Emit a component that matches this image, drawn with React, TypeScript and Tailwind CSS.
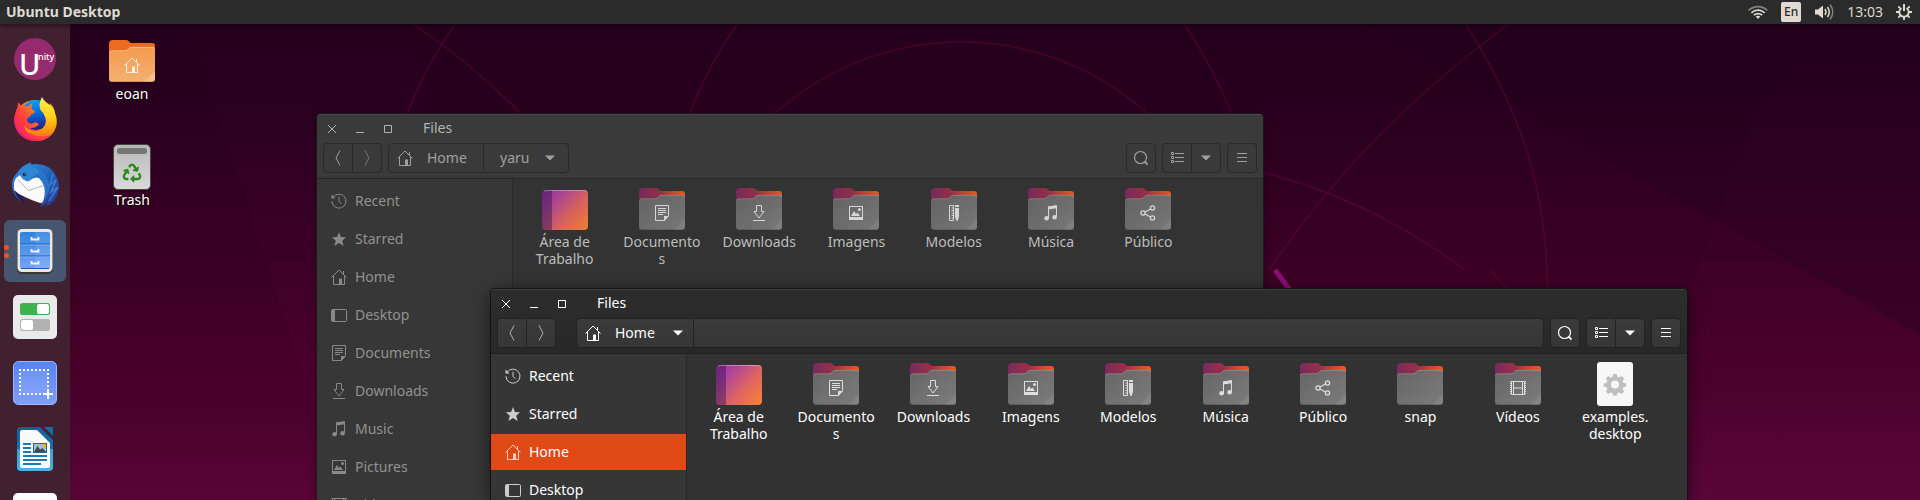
import type { ReactNode } from "react";
import clsx from "clsx";
import { FaRecycle } from "react-icons/fa";

type GlyphName =
  | "recent"
  | "star"
  | "home"
  | "desktop"
  | "document"
  | "download"
  | "music"
  | "picture"
  | "template"
  | "share"
  | "video";

/* 16x16 symbolic shapes, shared by the sidebar and the folder emblems */
const glyphs: Record<GlyphName, ReactNode> = {
  recent: (
    <>
      <path d="M2.2 4.2A7 7 0 1 1 1 8.6" fill="none" stroke="currentColor" />
      <path d="M1 8.6A7 7 0 0 0 2.6 12.6" fill="none" stroke="currentColor" strokeDasharray="1 1" />
      <path d="M.5 1.5v4h4z" fill="currentColor" />
      <path d="M8 3.8V8.4L10.4 10.8" fill="none" stroke="currentColor" />
    </>
  ),
  star: <path d="M8 1 9.9 6 15 6.300 11.200 9.700 12.600 15 8 12.1 3.400 15 4.800 9.700 1 6.300 6.1 6Z" fill="currentColor" />,
  home: (
    <>
      <path d="M.5 8.5 8 1l7.5 7.5M2.5 7v8.5h11V7M12.5 2v3" fill="none" stroke="currentColor" />
      <path d="M8 9.5h3V15H8z" fill="currentColor" />
    </>
  ),
  desktop: (
    <>
      <rect x=".5" y="2.5" width="15" height="12" rx="1" fill="none" stroke="currentColor" />
      <path d="M1 3h3v11H1z" fill="currentColor" />
    </>
  ),
  document: (
    <>
      <path d="M1.5.5h13v10l-4 5h-9z" fill="none" stroke="currentColor" />
      <path d="M10 11h5l-5 5zM4 3h8v1H4zM4 5h8v1H4zM4 7h8v1H4zM4 9h5v1H4z" fill="currentColor" />
    </>
  ),
  download: (
    <>
      <path d="M5.5.5h5v6H13L8 13 3 6.5h2.5z" fill="none" stroke="currentColor" />
      <path d="M2 15h12v1H2z" fill="currentColor" />
    </>
  ),
  music: (
    <>
      <path d="M5.5 13V2L13.5.8V11.5" fill="none" stroke="currentColor" />
      <path d="M5 1.6 14 .3v3L5 4.6z" fill="currentColor" />
      <circle cx="3.6" cy="13.3" r="2.3" fill="currentColor" />
      <circle cx="11.6" cy="12.3" r="2.3" fill="currentColor" />
    </>
  ),
  picture: (
    <>
      <path d="M1 1h14v14H1zM2 2v10h12V2z" fill="currentColor" fillRule="evenodd" />
      <path d="M3 11 6 6l2 3 1.5-1.5L12 11z" fill="currentColor" />
      <circle cx="11.5" cy="4.5" r="1.5" fill="currentColor" />
    </>
  ),
  template: (
    <>
      <path d="M3.5.5h4v15h-4z" fill="none" stroke="currentColor" />
      <path d="M5.5 3h2M5.5 5.5h2M5.5 8h2M5.5 10.5h2M5.5 13h2" stroke="currentColor" />
      <path d="M9 0h4v2H9zM9 3h4v9l-1.5 4h-1L9 12z" fill="currentColor" />
    </>
  ),
  share: (
    <g fill="none" stroke="currentColor" strokeWidth="1.3">
      <circle cx="3" cy="8" r="2.1" />
      <circle cx="12.5" cy="3" r="2.1" />
      <circle cx="12.5" cy="13" r="2.1" />
      <path d="M5 7l5.5-3M5 9l5.5 3" />
    </g>
  ),
  video: (
    <>
      <path d="M.5 1v14M15.5 1v14" stroke="currentColor" strokeDasharray="1 1" />
      <path d="M1.5 1.5h13v13h-13zM3.5 1.5v13M12.5 1.5v13M3.5 8h9" fill="none" stroke="currentColor" />
    </>
  ),
};

function Glyph({ name, className }: { name: GlyphName; className?: string }) {
  return (
    <svg viewBox="0 0 16 16" className={clsx("size-4 shrink-0", className)} aria-hidden="true">
      {glyphs[name]}
    </svg>
  );
}

function FolderIcon({ emblem, home = false }: { emblem?: GlyphName; home?: boolean }) {
  return (
    <svg viewBox="0 0 48 48" className="size-12" aria-hidden="true">
      <path
        d="M1 7Q1 3 5 3H18Q19.500 3 20.500 4L22.500 6H44Q47 6 47 9V20H1Z"
        fill={home ? "#eb6b20" : "url(#folder-back)"}
      />
      <path
        d="M1 16Q1 13.500 4 13.500H17Q18.500 13.500 19.500 12.500L21 11Q22 10 23.500 10H44Q47 10 47 13V42Q47 45 44 45H4Q1 45 1 42Z"
        fill={home ? "url(#home-front)" : "url(#folder-front)"}
      />
      <path
        d="M1.500 15.500Q2 13.800 4 13.800H17Q18.500 13.800 19.500 12.800L21 11.300Q22 10.300 23.500 10.300H44Q46 10.300 46.600 12"
        fill="none"
        stroke="#fff"
        strokeOpacity={home ? 0.35 : 0.2}
      />
      <path d="M36 45 47 34V42Q47 45 44 45Z" fill="#fff" fillOpacity={home ? 0.22 : 0.08} />
      <path d="M1.500 43Q2.300 44.600 4 44.600H44Q45.800 44.600 46.500 43" fill="none" stroke="#000" strokeOpacity=".18" />
      {emblem && (
        <svg x="16" y="20" width="16" height="16" viewBox="0 0 16 16" color={home ? "#fdf0e2" : "#dedede"}>
          {glyphs[emblem]}
        </svg>
      )}
    </svg>
  );
}

function DesktopFolderIcon() {
  return (
    <svg viewBox="0 0 48 48" className="size-12" aria-hidden="true">
      <rect x="1" y="5" width="46" height="40" rx="4" fill="url(#desk-folder)" />
      <path d="M5 5H11V45H5Q1 45 1 41V9Q1 5 5 5Z" fill="#2c1144" fillOpacity=".42" />
      <path d="M3 6.500Q4 5.500 5 5.500H43Q45 5.500 46 7" fill="none" stroke="#fff" strokeOpacity=".35" />
    </svg>
  );
}

function LauncherFileIcon() {
  return (
    <svg viewBox="0 0 48 48" className="size-12" aria-hidden="true">
      <rect x="6" y="2" width="36" height="44" rx="3" fill="#f7f7f7" />
      <path
        d="M22.2 14h3.600l.6 2.800 1.900.8 2.400-1.600 2.500 2.500-1.600 2.400.8 1.900 2.800.6v3.200l-2.800.6-.8 1.900 1.600 2.400-2.500 2.500-2.400-1.600-1.900.8-.6 2.300h-3.600l-.6-2.300-1.900-.8-2.400 1.600-2.500-2.500 1.600-2.400-.8-1.900-2.800-.6v-3.200l2.800-.6.8-1.900-1.600-2.400 2.500-2.500 2.400 1.600 1.900-.8zM24 20.500a4 4 0 1 0 0 8 4 4 0 0 0 0-8z"
        fill="#bfbfbf"
        fillRule="evenodd"
      />
    </svg>
  );
}

function TrashIcon() {
  return (
    <svg viewBox="0 0 48 48" className="size-12" aria-hidden="true">
      <rect x="5.500" y="1.500" width="37" height="45" rx="4.500" fill="url(#trash)" stroke="#444" />
      <rect x="9" y="5" width="30" height="6" rx="2.500" fill="#757575" />
      <FaRecycle x="14.500" y="20.500" width="19" height="19" size={19} color="#2b8a1a" />
    </svg>
  );
}

/* gradients referenced by the icons */
function Defs() {
  return (
    <svg className="absolute size-0" aria-hidden="true">
      <defs>
        <linearGradient id="folder-back" gradientUnits="userSpaceOnUse" x1="1" y1="16" x2="47" y2="6">
          <stop offset="0" stopColor="#772a5c" />
          <stop offset=".45" stopColor="#96304a" />
          <stop offset=".65" stopColor="#c04038" />
          <stop offset="1" stopColor="#f25a20" />
        </linearGradient>
        <linearGradient id="folder-front" x1="0" y1="0" x2="1" y2="1">
          <stop offset="0" stopColor="#656565" />
          <stop offset="1" stopColor="#7c7c7c" />
        </linearGradient>
        <linearGradient id="home-front" x1="0" y1="0" x2="0" y2="1">
          <stop offset="0" stopColor="#f49a50" />
          <stop offset="1" stopColor="#f5b070" />
        </linearGradient>
        <linearGradient id="desk-folder" x1="0" y1=".1" x2="1" y2=".9">
          <stop offset="0" stopColor="#a032a8" />
          <stop offset=".25" stopColor="#b2459a" />
          <stop offset=".6" stopColor="#dc6462" />
          <stop offset="1" stopColor="#fb7f37" />
        </linearGradient>
        <linearGradient id="trash" x1="0" y1="0" x2="0" y2="1">
          <stop offset="0" stopColor="#b8b8b8" />
          <stop offset="1" stopColor="#dadada" />
        </linearGradient>
        <linearGradient id="fox-body" x1=".1" y1=".9" x2=".9" y2=".3">
          <stop offset="0" stopColor="#e0148c" />
          <stop offset=".3" stopColor="#ff2a50" />
          <stop offset=".6" stopColor="#ff7a1a" />
          <stop offset="1" stopColor="#ffc21a" />
        </linearGradient>
        <linearGradient id="fox-head" x1="0" y1="1" x2="1" y2=".2">
          <stop offset="0" stopColor="#f4147c" />
          <stop offset=".45" stopColor="#ff3f3c" />
          <stop offset="1" stopColor="#ff9a1f" />
        </linearGradient>
        <linearGradient id="fox-globe" x1=".4" y1="0" x2=".5" y2="1">
          <stop offset="0" stopColor="#0ba0f8" />
          <stop offset=".5" stopColor="#0b5fd8" />
          <stop offset="1" stopColor="#2b1a80" />
        </linearGradient>
        <linearGradient id="fox-tail" x1=".4" y1="0" x2=".4" y2="1">
          <stop offset="0" stopColor="#fff04a" />
          <stop offset=".45" stopColor="#ffd21c" />
          <stop offset=".75" stopColor="#ff9a0c" />
          <stop offset="1" stopColor="#ff5a2a" />
        </linearGradient>
        <linearGradient id="bird" x1=".2" y1="0" x2=".8" y2="1">
          <stop offset="0" stopColor="#2f8ee0" />
          <stop offset=".5" stopColor="#1f5fb8" />
          <stop offset="1" stopColor="#2a3a94" />
        </linearGradient>
        <linearGradient id="drawer" x1="0" y1="0" x2="0" y2="1">
          <stop offset="0" stopColor="#2f83dd" />
          <stop offset="1" stopColor="#78a4fa" />
        </linearGradient>
        <linearGradient id="shot" x1="0" y1="0" x2="0" y2="1">
          <stop offset="0" stopColor="#5583f2" />
          <stop offset="1" stopColor="#7f9ff9" />
        </linearGradient>
        <linearGradient id="writer" x1="0" y1="0" x2="0" y2="1">
          <stop offset="0" stopColor="#086399" />
          <stop offset=".5" stopColor="#1474ac" />
          <stop offset=".5" stopColor="#3f9fd0" />
          <stop offset="1" stopColor="#4fb0dc" />
        </linearGradient>
      </defs>
    </svg>
  );
}

function Wallpaper() {
  return (
    <svg
      viewBox="0 0 1920 500"
      preserveAspectRatio="xMidYMin slice"
      className="absolute inset-0 size-full"
      aria-hidden="true"
    >
      <defs>
        <linearGradient id="wall" x1="0" y1="0" x2="0" y2="1">
          <stop offset="0" stopColor="#24001b" />
          <stop offset=".2" stopColor="#28001e" />
          <stop offset=".5" stopColor="#390024" />
          <stop offset=".75" stopColor="#480029" />
          <stop offset="1" stopColor="#570535" />
        </linearGradient>
        <linearGradient id="wedge" x1="0" y1="0" x2="0" y2="1">
          <stop offset="0" stopColor="#14000f" stopOpacity=".08" />
          <stop offset="1" stopColor="#14000f" stopOpacity=".28" />
        </linearGradient>
        <linearGradient id="glow" x1="0" y1="0" x2="0" y2="1">
          <stop offset="0" stopColor="#6a1050" stopOpacity="0" />
          <stop offset="1" stopColor="#6a1050" stopOpacity=".12" />
        </linearGradient>
      </defs>
      <rect width="1920" height="500" fill="url(#wall)" />
      <path d="M1320 0H1920V335Z" fill="url(#wedge)" />
      <path d="M1800 0H1920V500H1610Z" fill="url(#glow)" />
      <path d="M180 0 345 500H420V0Z" fill="url(#glow)" />
      <g fill="none" stroke="#7a0a4c" strokeOpacity=".36" strokeWidth="1.500">
        <path d="M412 23Q475 66 521 114" />
        <path d="M456 23Q425 66 407 114" />
        <path d="M738 23Q708 66 689 114" />
        <circle cx="961" cy="321" r="279" />
        <path d="M1184 23Q1212 66 1232 114" />
        <path d="M1465 23C1520 110 1548 190 1547 290" />
        <path d="M1510 23C1420 90 1340 165 1269 270" />
        <path d="M1262 172C1340 192 1405 225 1465 270" />
        <path d="M1490 270 1508 290" />
        <path d="M317 500 324 485" />
      </g>
      <path d="M1275 270 1290 290" stroke="#8a0f74" strokeWidth="5" fill="none" />
    </svg>
  );
}

function UnityIcon() {
  return (
    <svg viewBox="0 0 44 44" className="size-11 overflow-visible" aria-hidden="true">
      <circle cx="22" cy="22" r="21" fill="#952a6e" />
      <text x="6" y="38" fontSize="29" fontWeight="500" fill="#fff" fontFamily="Noto Sans, sans-serif">
        U
      </text>
      <text x="25" y="23" fontSize="9" fontWeight="500" fill="#fff" fontFamily="Noto Sans, sans-serif">
        nity
      </text>
    </svg>
  );
}

function FirefoxIcon() {
  return (
    <svg viewBox="0 0 46 46" className="size-[46px]" aria-hidden="true">
      <path d="M23 4A21 20.500 0 1 0 44 24.500Q44 12 34 7Z" fill="url(#fox-body)" />
      <circle cx="24" cy="19" r="15" fill="url(#fox-globe)" />
      <path
        d="M6.500 6Q8 9 10.500 10.500Q12.500 9.500 16 10.500Q18 8 20.500 7.500Q19 10.500 19.500 13Q23 14.500 23 16Q22 17.800 19 18.500Q18.800 20.500 16.500 21.500Q14.500 22.500 14.800 24.500Q17 28.500 20.500 27.500Q24 25.600 26.500 27.800Q27 29 25 30Q22.500 32.500 18 32Q22 36.500 29 34.500Q30 39 24 42.500Q11 43 5 33Q1 25 4 14.500Q5.500 12 6.500 6Z"
        fill="url(#fox-head)"
      />
      <path
        d="M30 1Q26 8 28.500 14Q33.500 19 34 25Q33 33 25 35Q16 36 12 29Q15 42 30 44.500Q41 41 44 31Q46 24 43 17.500Q43 14 40 10Q36 8 34.500 6.500Q31.500 4.500 30 1Z"
        fill="url(#fox-tail)"
      />
      <path d="M37 7Q38.500 11 42.500 15Q41.500 9.500 37 7Z" fill="#ffb914" />
      <path d="M5 30Q12 42 24 45Q33 45.500 39 39Q28 43 18 37Q9 34 5 30Z" fill="#ff3058" fillOpacity=".75" />
    </svg>
  );
}

function ThunderbirdIcon() {
  return (
    <svg viewBox="0 0 48 48" className="size-12" aria-hidden="true">
      <path
        d="M20 1Q18 3 18.500 3.500Q34 1 42 10Q50 21 47 31Q45 41 35 46L36.500 41Q33 45 29 46Q32 40 32 32L10 30L12 41Q3 37 1 26Q0 18 6 12Q10 6 14 4Z"
        fill="url(#bird)"
      />
      <path d="M2 24Q4 36 13 42Q11 36 12 31L6 22Z" fill="#1e1a58" />
      <path d="M5 17 9 14Q15 20 18 20Q23 15 28 17Q33 22 34 28Q34 38 31 42Q27 42 14 36Q8 34 3 29Q2 22 5 17Z" fill="#fafafa" />
      <path d="M7 19 17.500 29.500 34 24" fill="none" stroke="#b5b5b5" />
      <path d="M9 14Q12 5 20 1.500Q20 4 19 5.500Q28 6 28 12Q22 15 17 20.500Q11 19 9 14Z" fill="#2f86d2" />
      <path d="M28 8Q40 16 38 30L33 42Q36 24 28 17Q26 12 28 8Z" fill="#2c78c8" fillOpacity=".8" />
      <path d="M42 13 39 24 45 19 40 31 47 26 38 40" fill="none" stroke="#4a9be2" strokeWidth="1.500" strokeOpacity=".6" />
      <circle cx="13.500" cy="13.500" r="1.800" fill="#17284f" />
      <circle cx="13.800" cy="13.200" r=".7" fill="#a08640" />
    </svg>
  );
}

function FilesAppIcon() {
  return (
    <svg viewBox="0 0 40 48" className="h-12 w-10" aria-hidden="true">
      <rect x="2" y="2" width="36" height="45" rx="5" fill="#3a3630" />
      <rect x="2.500" y="2" width="35" height="43" rx="4.500" fill="#ece8df" />
      <rect x="5" y="5" width="30" height="37" rx="2" fill="url(#drawer)" />
      <path d="M20 5H33Q35 5 35 7V40Q35 42 33 42H20Z" fill="#fff" fillOpacity=".1" />
      <path d="M5 17H35M5 29H35M6 41.500H34" stroke="#1560b4" />
      <path d="M5 18H35M5 30H35" stroke="#8cbcf6" strokeOpacity=".7" />
      <path d="M16.500 10V12.500H23.500V10M16.500 22V24.500H23.500V22M16.500 34V36.500H23.500V34" fill="none" stroke="#f4f0ea" strokeWidth="1.800" />
    </svg>
  );
}

function TweaksIcon() {
  return (
    <svg viewBox="0 0 46 46" className="size-[46px]" aria-hidden="true">
      <rect x="1" y="1" width="44" height="44" rx="5" fill="#eaeaea" />
      <rect x="8" y="9" width="30" height="12" rx="2.500" fill="#3fb24f" />
      <rect x="25" y="10" width="12" height="10" rx="2" fill="#fff" />
      <rect x="8" y="25" width="30" height="12" rx="2.500" fill="#b2b2b2" />
      <rect x="9" y="26" width="12" height="10" rx="2" fill="#fff" />
    </svg>
  );
}

function ScreenshotIcon() {
  return (
    <svg viewBox="0 0 46 46" className="size-[46px]" aria-hidden="true">
      <rect x="1.500" y="1.500" width="43" height="43" rx="5" fill="url(#shot)" stroke="#9db8fb" />
      <rect x="8" y="10" width="28" height="24" fill="#fff" fillOpacity=".1" />
      <path d="M7 10H37M7 34H32" stroke="#fff" strokeWidth="2" strokeDasharray="2 2" />
      <path d="M8 13V35M36 13V27" stroke="#fff" strokeWidth="2" strokeDasharray="2 2" />
      <path d="M36 29V39M31 34H41" stroke="#fff" strokeWidth="2" />
    </svg>
  );
}

function WriterIcon() {
  return (
    <svg viewBox="0 0 40 46" className="h-[46px] w-10" aria-hidden="true">
      <path d="M6 1H25L38 14V41Q38 45 34 45H6Q2 45 2 41V5Q2 1 6 1Z" fill="url(#writer)" />
      <path d="M29 1H38V10Z" fill="#0b71a6" />
      <path d="M7 4H22L35 17V40Q35 42 33 42H7Q5 42 5 40V6Q5 4 7 4Z" fill="#fafafa" />
      <path d="M8 18H16M8 22H16M8 26H16M8 30H32M8 34H32M8 38H26" stroke="#1a7ab8" strokeWidth="2" />
      <rect x="18.500" y="17.500" width="13" height="9" fill="#8cc8ec" stroke="#1a6a9c" />
      <path d="M19 26 22.500 20 25 23.500 27.500 22 31 26Z" fill="#44484a" />
      <rect x="28" y="18" width="3" height="3" fill="#e8b912" />
    </svg>
  );
}

function BlankAppIcon() {
  return (
    <svg viewBox="0 0 46 46" className="size-[46px]" aria-hidden="true">
      <rect x="1" y="1" width="44" height="44" rx="5" fill="#fbfbfb" />
    </svg>
  );
}

function LauncherItem({ label, active = false, children }: { label: string; active?: boolean; children: ReactNode }) {
  return (
    <button type="button" aria-label={label} className="relative flex h-[66px] w-full shrink-0 items-center justify-center">
      <span
        className={clsx("flex size-[62px] items-center justify-center rounded-md", active && "bg-[#475670]")}
      >
        {children}
      </span>
      {active && (
        <span className="absolute left-1 flex flex-col gap-[3px]">
          <span className="size-[5px] rounded-full bg-[#e95420]" />
          <span className="size-[5px] rounded-full bg-[#e95420]" />
        </span>
      )}
    </button>
  );
}

function Launcher() {
  return (
    <nav aria-label="Launcher" className="relative flex w-[70px] shrink-0 flex-col overflow-hidden bg-[#41212f]">
      <button type="button" aria-label="Unity" className="flex h-[62px] shrink-0 items-center justify-center pt-2">
        <UnityIcon />
      </button>
      <LauncherItem label="Firefox">
        <FirefoxIcon />
      </LauncherItem>
      <LauncherItem label="Thunderbird">
        <ThunderbirdIcon />
      </LauncherItem>
      <LauncherItem label="Files" active>
        <FilesAppIcon />
      </LauncherItem>
      <LauncherItem label="Tweaks">
        <TweaksIcon />
      </LauncherItem>
      <LauncherItem label="Screenshot">
        <ScreenshotIcon />
      </LauncherItem>
      <LauncherItem label="Writer">
        <WriterIcon />
      </LauncherItem>
      <LauncherItem label="Applications">
        <BlankAppIcon />
      </LauncherItem>
    </nav>
  );
}

function TopBar() {
  return (
    <header className="relative z-10 flex h-6 shrink-0 items-center justify-between bg-[#2b2b2b] pr-2 pl-1.5 text-[#dfdbd2] shadow-[0_1px_4px_rgba(0,0,0,0.6)]">
      <h1 className="text-sm font-bold">Ubuntu Desktop</h1>
      <div className="flex items-center gap-[13px]">
        <button type="button" aria-label="Network">
          <svg viewBox="0 0 20 16" className="h-4 w-5" fill="none" stroke="#dfdbd2" strokeWidth="1.600" aria-hidden="true">
            <path d="M.6 6.400A13.500 13.500 0 0 1 19.400 6.400" strokeOpacity=".5" />
            <path d="M3.400 8.800A9.600 9.600 0 0 1 16.600 8.800" />
            <path d="M5.900 11.200A6 6 0 0 1 14.100 11.200" />
            <path d="M7.700 12.600Q10 11 12.300 12.600L10 15Z" fill="#dfdbd2" stroke="none" />
          </svg>
        </button>
        <button
          type="button"
          className="flex size-5 items-center justify-center rounded-xs bg-[#dfdbd2] text-xs font-medium text-[#2b2b2b]"
        >
          En
        </button>
        <button type="button" aria-label="Volume">
          <svg viewBox="0 0 20 18" className="h-[18px] w-5" fill="none" stroke="#dfdbd2" strokeWidth="1.500" aria-hidden="true">
            <path d="M1 6.500H4L9 2.500V15.500L4 11.500H1Z" fill="#dfdbd2" stroke="none" />
            <path d="M11 6Q13 9 11 12" />
            <path d="M13.500 4Q17 9 13.500 14" />
            <path d="M16 1.500Q21.500 9 16 16.500" strokeOpacity=".5" />
          </svg>
        </button>
        <time className="text-sm">13:03</time>
        <button type="button" aria-label="System">
          <svg viewBox="0 0 16 16" className="size-4" fill="none" stroke="#dfdbd2" aria-hidden="true">
            <path d="M5.500 4A4.700 4.700 0 1 0 10.500 4" strokeWidth="1.800" />
            <path d="M8 0V7" strokeWidth="2" />
            <path
              d="M4 4 2.300 2.300M12 4 13.700 2.300M3 8H0M13 8H16M4.300 11.700 2.300 13.700M11.700 11.700 13.700 13.700M8 13V16"
              strokeWidth="1.800"
            />
          </svg>
        </button>
      </div>
    </header>
  );
}

type Entry = { label: string; icon: ReactNode };

const yaruEntries: Entry[] = [
  { label: "Área de\nTrabalho", icon: <DesktopFolderIcon /> },
  { label: "Documento\ns", icon: <FolderIcon emblem="document" /> },
  { label: "Downloads", icon: <FolderIcon emblem="download" /> },
  { label: "Imagens", icon: <FolderIcon emblem="picture" /> },
  { label: "Modelos", icon: <FolderIcon emblem="template" /> },
  { label: "Música", icon: <FolderIcon emblem="music" /> },
  { label: "Público", icon: <FolderIcon emblem="share" /> },
];
const homeEntries: Entry[] = [
  ...yaruEntries,
  { label: "snap", icon: <FolderIcon /> },
  { label: "Vídeos", icon: <FolderIcon emblem="video" /> },
  { label: "examples.\ndesktop", icon: <LauncherFileIcon /> },
];

const places: { label: string; glyph: GlyphName }[] = [
  { label: "Recent", glyph: "recent" },
  { label: "Starred", glyph: "star" },
  { label: "Home", glyph: "home" },
  { label: "Desktop", glyph: "desktop" },
  { label: "Documents", glyph: "document" },
  { label: "Downloads", glyph: "download" },
  { label: "Music", glyph: "music" },
  { label: "Pictures", glyph: "picture" },
  { label: "Videos", glyph: "video" },
];

function Caret({ className }: { className?: string }) {
  return (
    <svg viewBox="0 0 10 6" className={clsx("h-1.5 w-2.5", className)} aria-hidden="true">
      <path d="M0 .5H10L5 5.500Z" fill="currentColor" />
    </svg>
  );
}

function Group({ focused, className, children }: { focused: boolean; className?: string; children: ReactNode }) {
  return (
    <div
      className={clsx(
        "flex h-[30px] divide-x overflow-hidden rounded border",
        focused
          ? "divide-[#222222] border-[#222222] bg-linear-to-b from-[#3b3b3b] to-[#363636] text-white"
          : "divide-[#292929] border-[#292929] text-[#a0a09f]",
        className,
      )}
    >
      {children}
    </div>
  );
}

function Tool({ label, dim = false, children }: { label: string; dim?: boolean; children: ReactNode }) {
  return (
    <button type="button" aria-label={label} className="flex flex-1 items-center justify-center">
      <span className={dim ? "opacity-60" : ""}>{children}</span>
    </button>
  );
}

function FilesWindow({
  focused,
  className,
  gridClass,
  entries,
  selected,
  path,
}: {
  focused: boolean;
  className: string;
  gridClass: string;
  entries: Entry[];
  selected?: string;
  path: ReactNode;
}) {
  return (
    <section
      aria-label="Files"
      className={clsx(
        "absolute bottom-0 flex flex-col overflow-hidden rounded-t",
        focused
          ? "bg-[#323232] shadow-[0_3px_16px_1px_rgba(0,0,0,0.55),0_0_0_1px_rgba(24,24,24,0.9)]"
          : "bg-[#333333] shadow-[0_2px_8px_rgba(0,0,0,0.35),0_0_0_1px_rgba(32,32,32,0.85)]",
        className,
      )}
    >
      <header
        className={clsx(
          "border-t border-b",
          focused
            ? "border-t-[#3d3d3d] border-b-[#202020] bg-linear-to-b from-[#2d2d2d] to-[#282828] text-white"
            : "border-t-[#474747] border-b-[#272727] bg-[#3a3a3a] text-[#b4b4b3]",
        )}
      >
        <div className="flex h-7 items-center">
          <div className="flex gap-3 pl-[7px]">
            <button type="button" aria-label="Close" className="flex size-4 items-center justify-center">
              <svg viewBox="0 0 8 8" className="size-2" stroke="currentColor" aria-hidden="true">
                <path d="M0 0 8 8M8 0 0 8" />
              </svg>
            </button>
            <button type="button" aria-label="Minimize" className="flex size-4 items-center justify-center">
              <svg viewBox="0 0 8 8" className="size-2" stroke="currentColor" aria-hidden="true">
                <path d="M0 7.500H8" />
              </svg>
            </button>
            <button type="button" aria-label="Maximize" className="flex size-4 items-center justify-center">
              <svg viewBox="0 0 8 8" className="size-2" fill="none" stroke="currentColor" aria-hidden="true">
                <path d="M.5 .5H7.500V7.500H.5Z" />
              </svg>
            </button>
          </div>
          <h2 className="pb-0.5 pl-[27px] text-sm">Files</h2>
        </div>
        <div className="flex gap-1.5 px-1.5 pb-[5px]">
          <Group focused={focused} className="w-[59px]">
            <Tool label="Back" dim={focused}>
              <svg viewBox="0 0 6 16" className="h-4 w-1.5" fill="none" stroke="currentColor" aria-hidden="true">
                <path d="M5 .5 1 8 5 15.500" />
              </svg>
            </Tool>
            <Tool label="Forward" dim>
              <svg viewBox="0 0 6 16" className="h-4 w-1.5" fill="none" stroke="currentColor" aria-hidden="true">
                <path d="M1 .5 5 8 1 15.500" />
              </svg>
            </Tool>
          </Group>
          {path}
          <Group focused={focused} className="ml-auto w-[30px]">
            <Tool label="Search">
              <svg viewBox="0 0 16 16" className="size-4" fill="none" stroke="currentColor" aria-hidden="true">
                <circle cx="7.500" cy="7.500" r="6" strokeWidth="1.200" />
                <path d="M11.500 11.500 14.500 14.500" strokeWidth="1.800" />
              </svg>
            </Tool>
          </Group>
          <Group focused={focused} className="w-[59px]">
            <Tool label="List view">
              <svg viewBox="0 0 14 12" className="h-3 w-3.5" fill="none" stroke="currentColor" aria-hidden="true">
                <path d="M1.500.5h2v2h-2zM1.500 4.500h2v2h-2zM1.500 8.500h2v2h-2zM5 1.500H14M5 5.500H14M5 9.500H14" />
              </svg>
            </Tool>
            <Tool label="View options">
              <Caret />
            </Tool>
          </Group>
          <Group focused={focused} className="w-[30px]">
            <Tool label="Menu">
              <svg viewBox="0 0 10 10" className="size-2.5" stroke="currentColor" aria-hidden="true">
                <path d="M0 .5H10M0 4.500H10M0 8.500H10" />
              </svg>
            </Tool>
          </Group>
        </div>
      </header>
      <div className="flex min-h-0 flex-1">
        <nav
          aria-label="Places"
          className={clsx(
            "flex w-[196px] shrink-0 flex-col gap-0.5 overflow-hidden border-r pt-1",
            focused ? "border-[#272727] bg-[#363636] text-white" : "border-[#2a2a2a] bg-[#373737] text-[#929291]",
          )}
        >
          {places.map((place) => (
            <button
              key={place.label}
              type="button"
              className={clsx(
                "flex h-9 shrink-0 items-center gap-2 pl-3.5 text-left text-sm",
                place.label === selected && "bg-[#df4a16]",
              )}
            >
              <Glyph name={place.glyph} className={focused ? "opacity-75" : "opacity-90"} />
              {place.label}
            </button>
          ))}
        </nav>
        <ul className={clsx("grid min-w-0 flex-1 content-start pt-1.5 pl-[3px]", gridClass, focused ? "text-white" : "text-[#bdbdbc]")}>
          {entries.map((entry) => (
            <li key={entry.label} className="flex justify-center">
              <button type="button" className="flex flex-col items-center">
                <span className={focused ? "" : "opacity-95"}>{entry.icon}</span>
                <span className="text-center text-sm leading-[17px] whitespace-pre-line">{entry.label}</span>
              </button>
            </li>
          ))}
        </ul>
      </div>
    </section>
  );
}

function DesktopShortcut({ label, children }: { label: string; children: ReactNode }) {
  return (
    <button type="button" className="flex h-[106px] w-24 flex-col items-center text-white">
      {children}
      <span className="text-sm leading-[17px] [text-shadow:1px_1px_1px_#000]">{label}</span>
    </button>
  );
}

export default function App() {
  return (
    <div className="relative flex h-screen flex-col overflow-hidden bg-[#24001b] font-['Noto_Sans',sans-serif]">
      <Defs />
      <Wallpaper />
      <TopBar />
      <div className="flex min-h-0 flex-1">
        <Launcher />
        <main className="relative flex-1">
          <div className="flex w-fit flex-col pt-[13px] pl-3.5">
            <DesktopShortcut label="eoan">
              <FolderIcon emblem="home" home />
            </DesktopShortcut>
            <DesktopShortcut label="Trash">
              <TrashIcon />
            </DesktopShortcut>
          </div>
          <FilesWindow
            focused={false}
            className="top-[90px] left-[247px] w-[946px]"
            gridClass="grid-cols-7 pr-[66px]"
            entries={yaruEntries}
            path={
              <Group focused={false}>
                <button type="button" className="flex w-[95px] items-center gap-3.5 pl-2 text-sm">
                  <Glyph name="home" />
                  Home
                </button>
                <button type="button" className="flex w-[84px] items-center gap-4 pl-4 text-sm">
                  yaru
                  <Caret />
                </button>
              </Group>
            }
          />
          <FilesWindow
            focused
            className="top-[265px] left-[421px] w-[1196px]"
            gridClass="grid-cols-10 pr-[23px]"
            entries={homeEntries}
            selected="Home"
            path={
              <Group focused className="ml-3.5 flex-1">
                <button type="button" className="flex w-[117px] items-center gap-3.5 pl-2 text-sm">
                  <Glyph name="home" />
                  Home
                  <Caret className="ml-1" />
                </button>
                <div className="flex-1" />
              </Group>
            }
          />
        </main>
      </div>
    </div>
  );
}
